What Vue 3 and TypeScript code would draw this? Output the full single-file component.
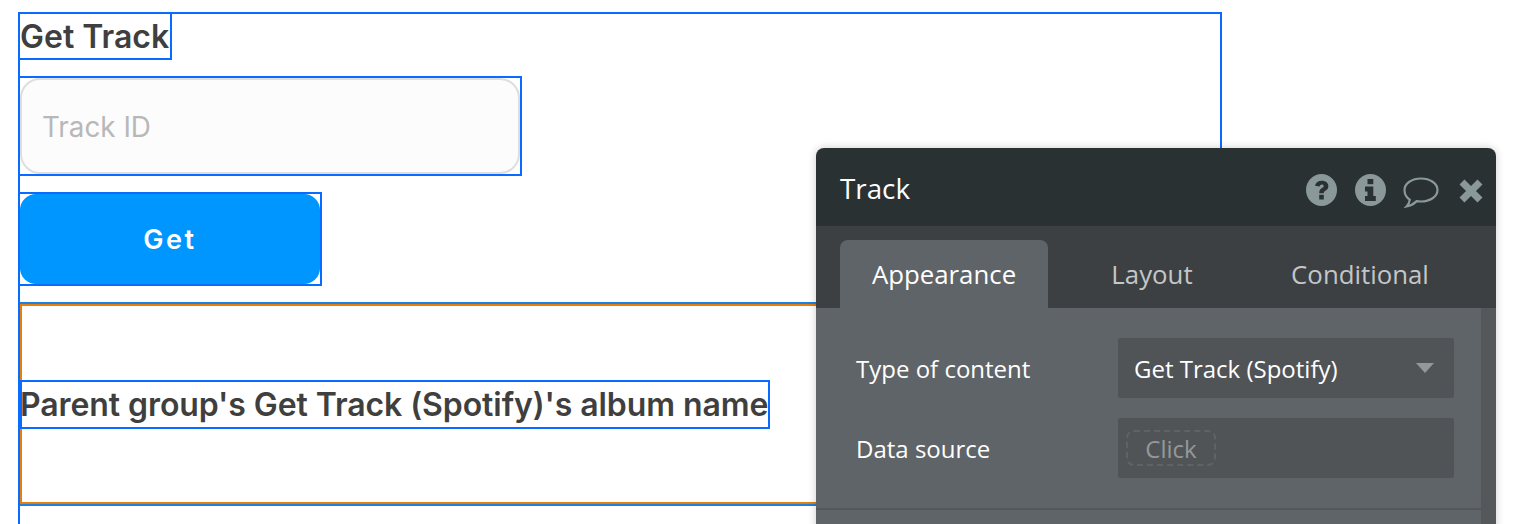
<script setup lang="ts">
const tabs = ['Appearance', 'Layout', 'Conditional']
const activeTab = 'Appearance'
</script>

<template>
  <div class="page">
    <div class="frame">
      <div class="box title-box">
        <span class="title">Get Track</span>
      </div>
      <div class="box input-box">
        <div class="input">Track ID</div>
      </div>
      <div class="box button-box">
        <div class="button">Get</div>
      </div>
      <div class="group">
        <div class="box album-box">
          <span class="title album">Parent group's Get Track (Spotify)'s album name</span>
        </div>
      </div>
    </div>

    <div class="panel">
      <div class="panel-head">
        <span class="panel-title">Track</span>
        <div class="panel-icons">
          <svg class="icon" width="31" height="32" viewBox="0 0 31 32">
            <ellipse cx="15.5" cy="16" rx="15.5" ry="16" fill="#8a9899" />
            <path d="M9 11.800c.6-3.300 3.200-5.100 6.800-5.100 3.800 0 6.600 2.100 6.600 5.400 0 2.500-1.400 3.700-3 4.700-1.200.8-1.600 1.300-1.600 2.500h-4.600c0-2.700.9-4 2.600-5.200 1.200-.8 1.900-1.300 1.900-2.200 0-1-.8-1.500-1.800-1.500-1.200 0-2 .7-2.300 2z" fill="#2a3133" />
            <rect x="13.200" y="20.800" width="4.600" height="4.700" fill="#2a3133" />
          </svg>
          <svg class="icon" width="31" height="32" viewBox="0 0 31 32">
            <ellipse cx="15.5" cy="16" rx="15.5" ry="16" fill="#8a9899" />
            <rect x="12.500" y="5" width="5.800" height="5.200" fill="#2a3133" />
            <path d="M10 12.500h8.300v9.500h2.500v5H10v-5h2.500v-4.500H10z" fill="#2a3133" />
          </svg>
          <svg class="icon comment" width="36" height="31" viewBox="0 0 36 31">
            <path d="M18 1.500c9 0 16.500 4.900 16.500 11.500S27 24.500 18 24.500c-1.500 0-3-.1-4.300-.4C11 26.800 8 28.600 3.500 29.500c1.800-2 3-4.100 3.300-6.900C3.300 20.500 1.500 17 1.500 13 1.500 6.400 9 1.500 18 1.500z" fill="none" stroke="#8a9899" stroke-width="2.200" />
          </svg>
          <svg class="icon close" width="24" height="24" viewBox="0 0 24 24">
            <path d="M3 3l18 18M21 3L3 21" fill="none" stroke="#8a9899" stroke-width="7" />
          </svg>
        </div>
      </div>

      <div class="panel-tabs">
        <div v-for="tab in tabs" :key="tab" class="tab" :class="{ active: tab === activeTab }">{{ tab }}</div>
      </div>

      <div class="panel-main">
        <div class="panel-body">
          <div class="rows">
            <div class="row">
              <span class="row-label">Type of content</span>
              <div class="field select">
                <span>Get Track (Spotify)</span>
                <span class="caret"></span>
              </div>
            </div>
            <div class="row">
              <span class="row-label">Data source</span>
              <div class="field">
                <span class="click">Click</span>
              </div>
            </div>
          </div>
          <div class="divider"></div>
        </div>
        <div class="scrollbar"></div>
      </div>
    </div>
  </div>
</template>

<style>
html,
body {
  margin: 0;
  height: 524px;
  overflow: hidden;
  background: #fff;
}
</style>

<style scoped>
.page {
  position: relative;
  height: 524px;
  overflow: hidden;
  padding: 12px 0 0 18px;
  box-sizing: border-box;
  font-family: Inter, "Liberation Sans", sans-serif;
}

.frame {
  width: 1204px;
  height: 600px;
  display: flex;
  flex-direction: column;
  align-items: flex-start;
  gap: 16px;
  outline: 2px solid #0a6cff;
  outline-offset: -2px;
}

.box {
  box-sizing: border-box;
  border: 2px solid #0a6cff;
  flex-shrink: 0;
}

.title {
  font-size: 32px;
  font-weight: 600;
  color: #3f3f3f;
  white-space: nowrap;
}

.album {
  margin-left: -2px;
  letter-spacing: -0.08px;
}

.title-box {
  width: 154px;
  height: 48px;
  display: flex;
  align-items: center;
}

.input-box {
  width: 504px;
  height: 100px;
}

.input {
  box-sizing: border-box;
  height: 96px;
  padding: 1px 0 0 20px;
  display: flex;
  align-items: center;
  background: #fcfcfc;
  border: 2px solid #dedede;
  border-radius: 20px;
  color: #b8b8b8;
  font-size: 27.8px;
}

.button-box {
  width: 304px;
  height: 94px;
}

.button {
  height: 90px;
  display: flex;
  align-items: center;
  justify-content: center;
  background: #0096ff;
  border-radius: 16px;
  color: #fff;
  font-size: 27px;
  font-weight: 600;
  letter-spacing: 2.6px;
}

.group {
  box-sizing: border-box;
  width: 100%;
  height: 204px;
  display: flex;
  align-items: center;
  border: 2px solid #1a82e2;
  box-shadow: inset 0 0 0 2px #e67e0a;
}

.album-box {
  width: 750px;
  height: 49px;
  display: flex;
  align-items: center;
}

.panel {
  position: absolute;
  left: 816px;
  top: 148px;
  width: 680px;
  height: 420px;
  display: flex;
  flex-direction: column;
  border-radius: 8px 8px 0 0;
  overflow: hidden;
  box-shadow: 0 0 8px rgba(0, 0, 0, 0.2);
  font-family: "Open Sans", "Liberation Sans", sans-serif;
}

.panel-head {
  box-sizing: border-box;
  height: 78px;
  flex-shrink: 0;
  display: flex;
  align-items: center;
  justify-content: space-between;
  padding: 2px 13px 0 24px;
  background: #2a3133;
}

.panel-title {
  color: #fff;
  font-size: 27.8px;
}

.panel-icons {
  display: flex;
  align-items: center;
  gap: 18.5px;
  margin-top: 4px;
}

.icon {
  display: block;
}

.comment {
  margin: 4px 2px 0 -2px;
}

.close {
  margin-top: 2px;
}

.panel-tabs {
  height: 82px;
  flex-shrink: 0;
  display: flex;
  align-items: flex-end;
  padding-left: 24px;
  background: #3c4043;
}

.tab {
  width: 208px;
  height: 68px;
  display: flex;
  align-items: center;
  justify-content: center;
  border-radius: 8px 8px 0 0;
  color: #c4c6c7;
  font-size: 25.8px;
}

.tab.active {
  background: #5f6468;
  color: #fff;
}

.panel-main {
  flex: 1;
  display: flex;
  background: #5f6468;
}

.panel-body {
  flex: 1;
  padding-top: 30px;
}

.scrollbar {
  width: 15px;
  background: #54585b;
}

.rows {
  display: flex;
  flex-direction: column;
  gap: 20px;
  padding: 0 27px 0 40px;
}

.row {
  display: flex;
  align-items: center;
  justify-content: space-between;
}

.row-label {
  color: #fff;
  font-size: 24px;
}

.field {
  box-sizing: border-box;
  width: 336px;
  height: 60px;
  display: flex;
  align-items: center;
  justify-content: space-between;
  padding: 0 20px 0 8px;
  background: #505457;
  border-radius: 2px;
}

.select {
  padding-left: 16px;
  color: #fff;
  font-size: 24px;
}

.caret {
  width: 0;
  height: 0;
  border-left: 9px solid transparent;
  border-right: 9px solid transparent;
  border-top: 10px solid #95989a;
}

.click {
  box-sizing: border-box;
  width: 90px;
  height: 36px;
  display: flex;
  align-items: center;
  justify-content: center;
  border: 2px dashed #5f6366;
  border-radius: 8px;
  color: #95989a;
  font-size: 24px;
}

.divider {
  height: 2px;
  margin-top: 30px;
  background: #54585b;
}
</style>
